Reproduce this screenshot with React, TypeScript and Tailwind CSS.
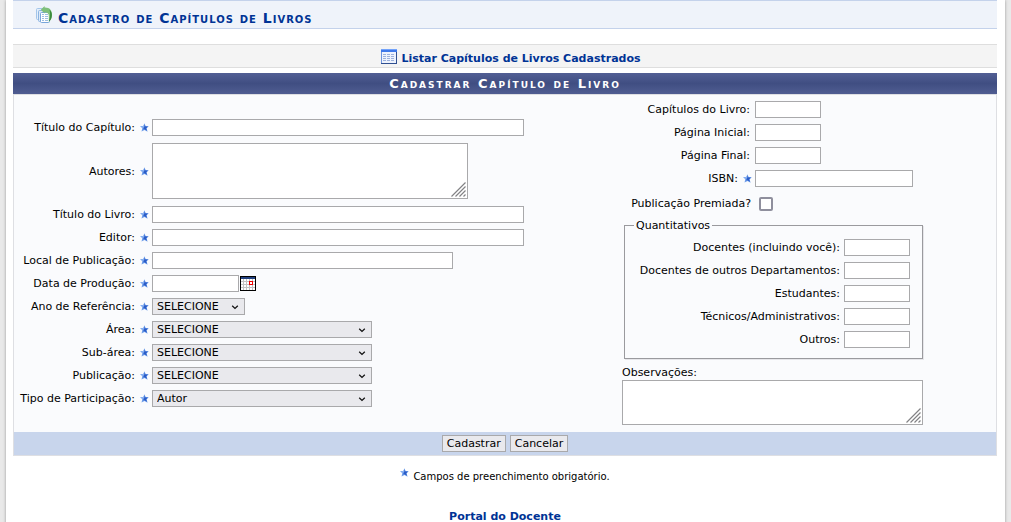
import type { ReactNode } from "react";
import { clsx } from "clsx";

interface FieldProps {
  id: string;
  label: string;
  required?: boolean;
  labelWidth: string;
  children: ReactNode;
}

interface SelectProps {
  id: string;
  width: string;
  options: string[];
}

const control = "h-[17px] max-w-full border border-[#a9a9ab] bg-white px-1 text-[11px]";

const quantities = [
  { id: "docentes", label: "Docentes (incluindo você):" },
  { id: "docentesOutros", label: "Docentes de outros Departamentos:" },
  { id: "estudantes", label: "Estudantes:" },
  { id: "tecnicos", label: "Técnicos/Administrativos:" },
  { id: "outros", label: "Outros:" },
];

function Star() {
  return (
    <svg width="9" height="9" viewBox="0 0 9 9" className="shrink-0" aria-hidden="true">
      <path d="M4.4 0.3 L5.6 3 L8.8 3.2 L6.6 5.3 L7.6 8.7 L4.5 7 L1.5 8.5 L2.3 5.3 L0.1 3.1 L3.3 2.9 Z" fill="#6f9eea" />
      <path d="M4.6 1.6 L5.4 3.5 L8 3.5 L6.2 5.3 L6.9 7.8 L4.5 6.2 L3.4 6.6 L3.6 4.4 Z" fill="#2a5cc8" />
      <path d="M0.6 3.2 L3.5 3.1 L4.3 1 L4.3 3.9 L2.6 4.9 Z" fill="#8ab2f2" />
    </svg>
  );
}

function PagesIcon() {
  return (
    <svg width="16" height="18" viewBox="0 0 16 18" className="shrink-0" aria-hidden="true">
      <rect x="0.5" y="2.5" width="9" height="11" rx="1" fill="#e3eefa" stroke="#a3c5ea" />
      <rect x="2.5" y="4.5" width="9" height="11" rx="1" fill="#dce9f8" stroke="#8cb4e2" />
      <rect x="4.5" y="6.5" width="9" height="10" rx="1" fill="#fff" stroke="#78a6da" />
      <path d="M6 8.5 H8 M9 8.5 H12 M6 10.5 H12 M6 12.5 H12 M6 14.5 H12" stroke="#9dbde2" />
      <path d="M8.5 7 V16" stroke="#fff" />
      <path d="M4.8 3.8 L8.6 0 V1.4 C13.6 1.2 16 4 15.9 8.5 C15.8 12 15 14.2 12.8 15.4 V10 C12.8 7.4 11.4 6.4 8.6 6.3 V7.6 Z" fill="#7fc07a" />
      <path d="M13.4 3.6 C15 5 16 7 15.9 9 C15.8 12.4 14.8 14.4 12.8 15.4 C14.2 12.5 14.6 7 13.4 3.6 Z" fill="#3a8a3c" />
    </svg>
  );
}

function TableIcon() {
  return (
    <svg width="16" height="15" viewBox="0 0 16 15" className="shrink-0" aria-hidden="true">
      <rect x="0.5" y="0.5" width="15" height="14" fill="#eef3fd" stroke="#6e94de" />
      <path d="M0 14.5 H16 M15.5 3 V15" stroke="#2f4f91" />
      <rect width="16" height="3" fill="#3f79ea" />
      <path d="M0 0.5 H16" stroke="#74a3fa" />
      <path d="M2 5.5 H14 M2 7.5 H14 M2 9.5 H14 M2 11.5 H14" stroke="#9db2dd" strokeDasharray="3 1" />
    </svg>
  );
}

function CalendarIcon() {
  return (
    <svg width="16" height="15" viewBox="0 0 16 15" aria-hidden="true" shapeRendering="crispEdges">
      <rect x="0.5" y="0.5" width="15" height="14" fill="#fff" stroke="#000" />
      <rect x="1" y="1" width="14" height="2" fill="#21407f" />
      <path d="M1 5.5 H15 M1 8.5 H15 M1 11.5 H15 M3.5 3 V14 M6.5 3 V14 M9.5 3 V14 M12.5 3 V14" stroke="#c3c3c3" />
      <rect x="9.5" y="5.5" width="3" height="3" fill="#fff" stroke="#f00000" />
    </svg>
  );
}

function Field({ id, label, required, labelWidth, children }: FieldProps) {
  return (
    <div className="flex items-center">
      <label htmlFor={id} className={clsx("shrink-0 text-right whitespace-nowrap", labelWidth)}>
        {label}
      </label>
      {required && (
        <span className="flex w-[17px] shrink-0 justify-center pl-[2px]">
          <Star />
        </span>
      )}
      {children}
    </div>
  );
}

function Select({ id, width, options }: SelectProps) {
  return (
    <div className={clsx("relative max-w-full", width)}>
      <select id={id} className="block h-[17px] w-full appearance-none border border-[#a9a9ab] bg-[#e9e9ed] pl-1 text-[11px] leading-[15px]">
        {options.map((option) => (
          <option key={option}>{option}</option>
        ))}
      </select>
      <svg width="8" height="5" viewBox="0 0 8 5" className="pointer-events-none absolute top-[7px] right-[6px]" aria-hidden="true">
        <path d="M1.2 0.8 L4 3.4 L6.8 0.8" fill="none" stroke="#111" strokeWidth="1.3" />
      </svg>
    </div>
  );
}

function TextArea({ id, size }: { id: string; size: string }) {
  return (
    <div className={clsx("relative max-w-full", size)}>
      <textarea id={id} className="block size-full resize-none border border-[#a9a9ab] bg-white p-1 text-[11px]" />
      <svg width="15" height="15" viewBox="0 0 15 15" className="pointer-events-none absolute right-[2px] bottom-[2px]" aria-hidden="true">
        <path d="M0.5 14.5 L14.5 0.5 M4.5 14.5 L14.5 4.5 M8.5 14.5 L14.5 8.5 M12.5 14.5 L14.5 12.5" stroke="#828285" strokeWidth="1.2" />
      </svg>
    </div>
  );
}

export default function App() {
  return (
    <div className="min-h-screen bg-[#e9e9e9] px-[6px] font-['Verdana','DejaVu_Sans',sans-serif] text-[11px] leading-[17px] text-black">
      <div className="min-h-screen bg-white pr-2 pl-[7px] shadow-[0_0_3px_#999]">
        <h2 className="flex h-[29px] items-center gap-[6px] border-y border-[#c4d2eb] bg-[#eff3fa] pl-[23px] text-sm font-bold text-[#003395]">
          <PagesIcon />
          <span className="pt-[7px] tracking-[1px] [font-variant:small-caps]">Cadastro de Capítulos de Livros</span>
        </h2>

        <div className="mt-[15px] flex h-6 items-center justify-center gap-1 border-y border-[#dedede] bg-[#f4f4f4] pl-3 font-bold text-[#003395]">
          <TableIcon />
          <a href="#listar" className="pt-1">
            Listar Capítulos de Livros Cadastrados
          </a>
        </div>

        <form className="mt-[5px]">
          <h3 className="flex h-[21px] items-center justify-center bg-linear-to-b from-[#525f94] via-[#404e82] to-[#505d92] text-[13px] font-bold tracking-[2px] text-white [font-variant:small-caps]">
            Cadastrar Capítulo de Livro
          </h3>

          <div className="border border-[#dedfe3] bg-[#fafbfd]">
            <div className="flex pt-[6px] pb-[7px]">
              <div className="flex min-w-0 flex-1 flex-col gap-[6px] pt-[18px]">
                <Field id="titulo" label="Título do Capítulo:" required labelWidth="w-[121px]">
                  <input id="titulo" type="text" className={clsx(control, "w-[372px]")} />
                </Field>
                <Field id="autores" label="Autores:" required labelWidth="w-[121px]">
                  <TextArea id="autores" size="my-px h-[56px] w-[316px]" />
                </Field>
                <Field id="livro" label="Título do Livro:" required labelWidth="w-[121px]">
                  <input id="livro" type="text" className={clsx(control, "w-[372px]")} />
                </Field>
                <Field id="editor" label="Editor:" required labelWidth="w-[121px]">
                  <input id="editor" type="text" className={clsx(control, "w-[372px]")} />
                </Field>
                <Field id="local" label="Local de Publicação:" required labelWidth="w-[121px]">
                  <input id="local" type="text" className={clsx(control, "w-[301px]")} />
                </Field>
                <Field id="data" label="Data de Produção:" required labelWidth="w-[121px]">
                  <input id="data" type="text" className={clsx(control, "w-[87px]")} />
                  <button type="button" aria-label="Calendário" className="ml-px">
                    <CalendarIcon />
                  </button>
                </Field>
                <Field id="ano" label="Ano de Referência:" required labelWidth="w-[121px]">
                  <Select id="ano" width="w-[93px]" options={["SELECIONE"]} />
                </Field>
                <Field id="area" label="Área:" required labelWidth="w-[121px]">
                  <Select id="area" width="w-[220px]" options={["SELECIONE"]} />
                </Field>
                <Field id="subarea" label="Sub-área:" required labelWidth="w-[121px]">
                  <Select id="subarea" width="w-[220px]" options={["SELECIONE"]} />
                </Field>
                <Field id="publicacao" label="Publicação:" required labelWidth="w-[121px]">
                  <Select id="publicacao" width="w-[220px]" options={["SELECIONE"]} />
                </Field>
                <Field id="participacao" label="Tipo de Participação:" required labelWidth="w-[121px]">
                  <Select id="participacao" width="w-[220px]" options={["Autor"]} />
                </Field>
              </div>

              <div className="w-[374px] shrink-0">
                <div className="flex flex-col gap-[6px]">
                  <Field id="capitulos" label="Capítulos do Livro:" labelWidth="w-[133px] pr-[5px]">
                    <input id="capitulos" type="text" className={clsx(control, "w-[66px]")} />
                  </Field>
                  <Field id="inicial" label="Página Inicial:" labelWidth="w-[133px] pr-[5px]">
                    <input id="inicial" type="text" className={clsx(control, "w-[66px]")} />
                  </Field>
                  <Field id="final" label="Página Final:" labelWidth="w-[133px] pr-[5px]">
                    <input id="final" type="text" className={clsx(control, "w-[66px]")} />
                  </Field>
                  <Field id="isbn" label="ISBN:" required labelWidth="w-[116px]">
                    <input id="isbn" type="text" className={clsx(control, "w-[158px]")} />
                  </Field>
                </div>
                <div className="mt-2">
                  <Field id="premiada" label="Publicação Premiada?" labelWidth="w-[137px] pr-2">
                    <input
                      id="premiada"
                      type="checkbox"
                      className="size-[14px] appearance-none rounded-xs border-2 border-[#8f8f9d] bg-white"
                    />
                  </Field>
                </div>

                <fieldset className="mt-[5px] ml-[2px] w-[299px] border border-[#9a9a9e] pt-[5px] pb-[10px] pl-[9px] shadow-[1px_1px_0_#e6e6ea]">
                  <legend className="px-[2px]">Quantitativos</legend>
                  <div className="flex flex-col gap-[6px]">
                    {quantities.map(({ id, label }) => (
                      <Field key={id} id={id} label={label} labelWidth="w-[210px] pr-1">
                        <input id={id} type="text" className={clsx(control, "w-[66px]")} />
                      </Field>
                    ))}
                  </div>
                </fieldset>

                <label htmlFor="observacoes" className="mt-[6px] block leading-[15px]">
                  Observações:
                </label>
                <TextArea id="observacoes" size="h-[45px] w-[301px]" />
              </div>
            </div>

            <div className="flex h-[23px] items-center justify-center gap-1 bg-[#c8d5ec]">
              <button type="submit" className="h-[17px] border border-[#a9a9ab] bg-[#e9e9ed] px-1 leading-[15px]">
                Cadastrar
              </button>
              <button type="button" className="h-[17px] border border-[#a9a9ab] bg-[#e9e9ed] px-1 leading-[15px]">
                Cancelar
              </button>
            </div>
          </div>
        </form>

        <p className="mt-3 flex justify-center gap-1 text-[10px]">
          <Star />
          <span>Campos de preenchimento obrigatório.</span>
        </p>

        <p className="mt-[23px] text-center font-bold text-[#003395]">
          <a href="#portal">Portal do Docente</a>
        </p>
      </div>
    </div>
  );
}
